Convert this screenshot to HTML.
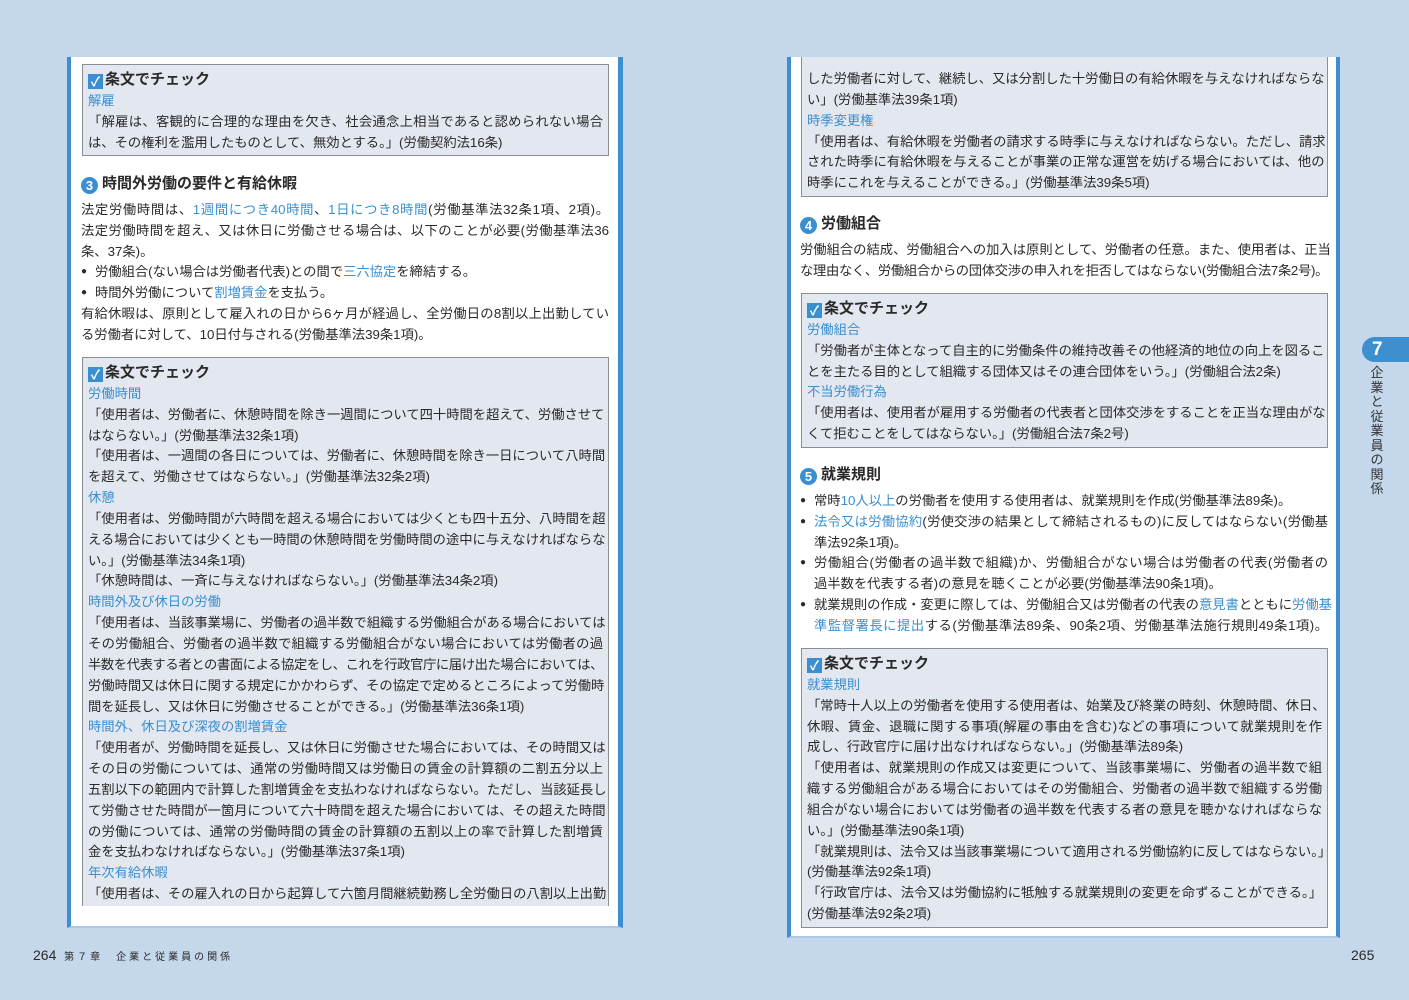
<!DOCTYPE html>
<html><head><meta charset="utf-8">
<style>
*{margin:0;padding:0;box-sizing:border-box}
body{width:1409px;height:1000px;background:#c4d7eb;position:relative;overflow:hidden;font-family:"Liberation Sans","Noto Sans CJK JP",sans-serif;color:#2a2a2a;font-size:13.3px}
.panel{position:absolute;background:#fff}
.blk{position:absolute}
.l{height:20.85px;line-height:20.85px;white-space:nowrap;text-align:justify;text-align-last:justify;overflow:visible}
.e{text-align-last:left}
.tight{letter-spacing:-0.4px}
.box{position:absolute;background:#e3e7ef;border:1px solid #8a8e96;padding:0 5px}
.b{color:#3a8fd0}
.t{font-weight:bold;font-size:15px;text-align-last:left}
.ck{display:inline-block;width:15px;height:15px;background:#3a8fd0;color:#fff;font-size:13px;line-height:15px;text-align:center;text-align-last:center;vertical-align:-2px;margin-right:2px;font-weight:bold}
.num{display:inline-block;width:17px;height:17px;border-radius:50%;background:#3a8fd0;color:#fff;font-size:13px;line-height:17px;text-align:center;text-align-last:center;font-weight:bold;margin-right:4px;vertical-align:-2px}
.h{font-weight:bold;font-size:15px;text-align-last:left}
.bu{padding-left:14px;position:relative}
.bu:before{content:"●";position:absolute;left:0;font-size:10px}
.ind{padding-left:14px}
</style></head><body>

<div class="panel" style="left:67px;top:57px;width:556px;height:871px;border-left:4px solid #3d8fcf;border-right:5px solid #3d8fcf;border-bottom:2px solid #a9c9e6"></div>
<div class="panel" style="left:787px;top:57px;width:553px;height:881px;border-left:4px solid #3d8fcf;border-right:4px solid #3d8fcf;border-bottom:2px solid #a9c9e6"></div>

<!-- LEFT -->
<div class="box" style="left:82px;top:64px;width:527px;height:92px;padding-top:5px">
<div class="l t"><span class="ck">✓</span>条文でチェック</div>
<div class="l b e">解雇</div>
<div class="l">「解雇は、客観的に合理的な理由を欠き、社会通念上相当であると認められない場合</div>
<div class="l e">は、その権利を濫用したものとして、無効とする。」(労働契約法16条)</div>
</div>

<div class="blk" style="left:81px;top:174px;width:528px">
<div class="l h"><span class="num">3</span>時間外労働の要件と有給休暇</div>
<div class="l" style="margin-top:5px">法定労働時間は、<span class="b">1週間につき40時間</span>、<span class="b">1日につき8時間</span>(労働基準法32条1項、2項)。</div>
<div class="l">法定労働時間を超え、又は休日に労働させる場合は、以下のことが必要(労働基準法36</div>
<div class="l e">条、37条)。</div>
<div class="l e bu">労働組合(ない場合は労働者代表)との間で<span class="b">三六協定</span>を締結する。</div>
<div class="l e bu">時間外労働について<span class="b">割増賃金</span>を支払う。</div>
<div class="l">有給休暇は、原則として雇入れの日から6ヶ月が経過し、全労働日の8割以上出勤してい</div>
<div class="l e">る労働者に対して、10日付与される(労働基準法39条1項)。</div>
</div>

<div class="box" style="left:82px;top:357px;width:527px;height:549px;padding-top:5px;border-bottom:none">
<div class="l t"><span class="ck">✓</span>条文でチェック</div>
<div class="l b e">労働時間</div>
<div class="l">「使用者は、労働者に、休憩時間を除き一週間について四十時間を超えて、労働させて</div>
<div class="l e">はならない。」(労働基準法32条1項)</div>
<div class="l">「使用者は、一週間の各日については、労働者に、休憩時間を除き一日について八時間</div>
<div class="l e">を超えて、労働させてはならない。」(労働基準法32条2項)</div>
<div class="l b e">休憩</div>
<div class="l">「使用者は、労働時間が六時間を超える場合においては少くとも四十五分、八時間を超</div>
<div class="l">える場合においては少くとも一時間の休憩時間を労働時間の途中に与えなければならな</div>
<div class="l e">い。」(労働基準法34条1項)</div>
<div class="l e">「休憩時間は、一斉に与えなければならない。」(労働基準法34条2項)</div>
<div class="l b e">時間外及び休日の労働</div>
<div class="l">「使用者は、当該事業場に、労働者の過半数で組織する労働組合がある場合においては</div>
<div class="l">その労働組合、労働者の過半数で組織する労働組合がない場合においては労働者の過</div>
<div class="l tight">半数を代表する者との書面による協定をし、これを行政官庁に届け出た場合においては、</div>
<div class="l">労働時間又は休日に関する規定にかかわらず、その協定で定めるところによって労働時</div>
<div class="l e">間を延長し、又は休日に労働させることができる。」(労働基準法36条1項)</div>
<div class="l b e">時間外、休日及び深夜の割増賃金</div>
<div class="l">「使用者が、労働時間を延長し、又は休日に労働させた場合においては、その時間又は</div>
<div class="l">その日の労働については、通常の労働時間又は労働日の賃金の計算額の二割五分以上</div>
<div class="l">五割以下の範囲内で計算した割増賃金を支払わなければならない。ただし、当該延長し</div>
<div class="l">て労働させた時間が一箇月について六十時間を超えた場合においては、その超えた時間</div>
<div class="l">の労働については、通常の労働時間の賃金の計算額の五割以上の率で計算した割増賃</div>
<div class="l e">金を支払わなければならない。」(労働基準法37条1項)</div>
<div class="l b e">年次有給休暇</div>
<div class="l">「使用者は、その雇入れの日から起算して六箇月間継続勤務し全労働日の八割以上出勤</div>
</div>

<div class="blk" style="left:33px;top:947px;font-size:14px;white-space:nowrap">264&nbsp; <span style="font-size:10px;letter-spacing:3px">第７章　企業と従業員の関係</span></div>

<!-- RIGHT -->
<div class="box" style="left:801px;top:57px;width:527px;height:140px;padding-top:12px;border-top:none">
<div class="l">した労働者に対して、継続し、又は分割した十労働日の有給休暇を与えなければならな</div>
<div class="l e">い」(労働基準法39条1項)</div>
<div class="l b e">時季変更権</div>
<div class="l">「使用者は、有給休暇を労働者の請求する時季に与えなければならない。ただし、請求</div>
<div class="l">された時季に有給休暇を与えることが事業の正常な運営を妨げる場合においては、他の</div>
<div class="l e">時季にこれを与えることができる。」(労働基準法39条5項)</div>
</div>

<div class="blk" style="left:800px;top:214px;width:528px">
<div class="l h"><span class="num">4</span>労働組合</div>
<div class="l" style="margin-top:5px">労働組合の結成、労働組合への加入は原則として、労働者の任意。また、使用者は、正当</div>
<div class="l tight">な理由なく、労働組合からの団体交渉の申入れを拒否してはならない(労働組合法7条2号)。</div>
</div>

<div class="box" style="left:801px;top:293px;width:527px;height:155px;padding-top:5px">
<div class="l t"><span class="ck">✓</span>条文でチェック</div>
<div class="l b e">労働組合</div>
<div class="l">「労働者が主体となって自主的に労働条件の維持改善その他経済的地位の向上を図るこ</div>
<div class="l e">とを主たる目的として組織する団体又はその連合団体をいう。」(労働組合法2条)</div>
<div class="l b e">不当労働行為</div>
<div class="l">「使用者は、使用者が雇用する労働者の代表者と団体交渉をすることを正当な理由がな</div>
<div class="l e">くて拒むことをしてはならない。」(労働組合法7条2号)</div>
</div>

<div class="blk" style="left:800px;top:465px;width:528px">
<div class="l h"><span class="num">5</span>就業規則</div>
<div class="l e bu" style="margin-top:5px">常時<span class="b">10人以上</span>の労働者を使用する使用者は、就業規則を作成(労働基準法89条)。</div>
<div class="l bu"><span class="b">法令又は労働協約</span>(労使交渉の結果として締結されるもの)に反してはならない(労働基</div>
<div class="l e ind">準法92条1項)。</div>
<div class="l bu">労働組合(労働者の過半数で組織)か、労働組合がない場合は労働者の代表(労働者の</div>
<div class="l e ind">過半数を代表する者)の意見を聴くことが必要(労働基準法90条1項)。</div>
<div class="l bu">就業規則の作成・変更に際しては、労働組合又は労働者の代表の<span class="b">意見書</span>とともに<span class="b">労働基</span></div>
<div class="l ind"><span class="b">準監督署長に提出</span>する(労働基準法89条、90条2項、労働基準法施行規則49条1項)。</div>
</div>

<div class="box" style="left:801px;top:648px;width:527px;height:280px;padding-top:5px">
<div class="l t"><span class="ck">✓</span>条文でチェック</div>
<div class="l b e">就業規則</div>
<div class="l">「常時十人以上の労働者を使用する使用者は、始業及び終業の時刻、休憩時間、休日、</div>
<div class="l">休暇、賃金、退職に関する事項(解雇の事由を含む)などの事項について就業規則を作</div>
<div class="l e">成し、行政官庁に届け出なければならない。」(労働基準法89条)</div>
<div class="l">「使用者は、就業規則の作成又は変更について、当該事業場に、労働者の過半数で組</div>
<div class="l">織する労働組合がある場合においてはその労働組合、労働者の過半数で組織する労働</div>
<div class="l">組合がない場合においては労働者の過半数を代表する者の意見を聴かなければならな</div>
<div class="l e">い。」(労働基準法90条1項)</div>
<div class="l">「就業規則は、法令又は当該事業場について適用される労働協約に反してはならない。」</div>
<div class="l e">(労働基準法92条1項)</div>
<div class="l">「行政官庁は、法令又は労働協約に牴触する就業規則の変更を命ずることができる。」</div>
<div class="l e">(労働基準法92条2項)</div>
</div>

<div class="blk" style="left:1351px;top:947px;font-size:14px">265</div>

<!-- tab -->
<div class="blk" style="left:1362px;top:337px;width:50px;height:25px;background:#3d8fcf;border-radius:13px 0 0 13px;color:#fff;font-weight:bold;font-size:19px;line-height:25px;padding-left:10px">7</div>
<div class="blk" style="left:1369px;top:366px;width:16px;font-size:13px;line-height:14.5px;color:#333;text-align:center">企<br>業<br>と<br>従<br>業<br>員<br>の<br>関<br>係</div>

</body></html>
